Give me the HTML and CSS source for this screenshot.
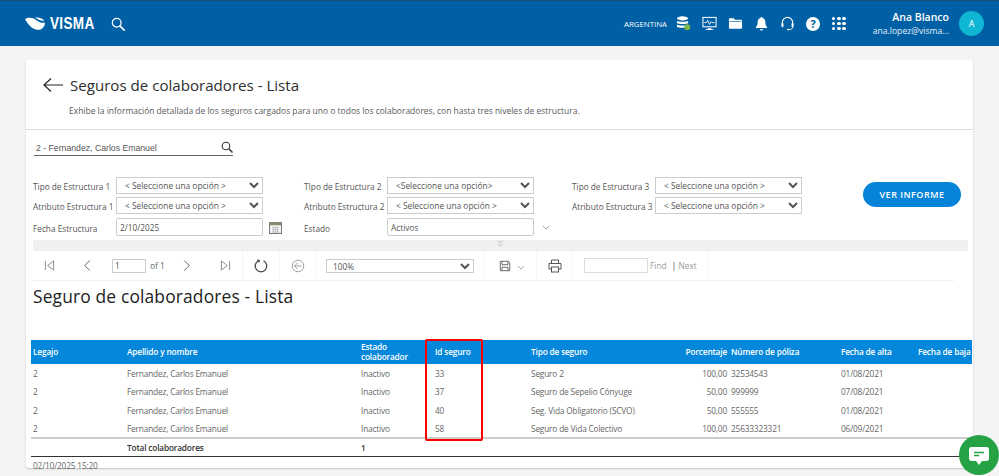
FILE: index.html
```html
<!DOCTYPE html>
<html lang="es">
<head>
<meta charset="utf-8">
<title>Seguros de colaboradores - Lista</title>
<link rel="stylesheet" href="styles.css">
</head>
<body>
<header class="topbar">
  <div class="brand">
    <svg class="logo-mark" viewBox="0 0 20 13"><path d="M0 1.500C4-.5 8 .3 11 2.400c3 2 6 3.800 8.800 2.400.4 3.400-1.800 7-5.600 7.500C9.200 13 3.600 8.500 0 1.500z" fill="#fff"/><path d="M10 .2c3.500-.6 7 .6 9.400 3-2.300.5-4.700-.4-6.800-1.700-.9-.5-1.700-.9-2.600-1.300z" fill="#fff"/></svg>
    <span class="logo-text">VISMA</span>
    <svg class="top-search" viewBox="0 0 16 16"><circle cx="6.500" cy="6.500" r="5" fill="none" stroke="#fff" stroke-width="1.400"/><path d="M10.200 10.200L15 15" stroke="#fff" stroke-width="1.800" stroke-linecap="round"/></svg>
  </div>
  <div class="top-right">
    <span class="country">ARGENTINA</span>
    <svg class="ti" viewBox="0 0 16 16"><g fill="#fff"><ellipse cx="7" cy="2.500" rx="6" ry="2.200"/><path d="M1 5c1 1.500 11 1.500 12 0v2.500c-1 1.500-11 1.500-12 0zM1 9c1 1.500 11 1.500 12 0v2.500c-1 1.500-11 1.500-12 0z"/></g><circle cx="12" cy="12" r="3.200" fill="#7ab648"/></svg>
    <svg class="ti" viewBox="0 0 16 16"><rect x="1" y="1.500" width="14" height="10" fill="none" stroke="#fff" stroke-width="1.100"/><path d="M2.500 7h2.500l1-2.500 2 4.500 1.500-3 1 1h3" fill="none" stroke="#fff" stroke-width=".9"/><path d="M6 13h4v1h2v1H4v-1h2z" fill="#fff"/></svg>
    <svg class="ti" viewBox="0 0 16 16"><path d="M1 3.500c0-.6.400-1 1-1h4l1.500 1.500H14c.6 0 1 .4 1 1v7.500c0 .6-.4 1-1 1H2c-.6 0-1-.4-1-1z" fill="#fff"/><path d="M1.500 5.800h13" stroke="#005fa5" stroke-width=".7"/></svg>
    <svg class="ti" viewBox="0 0 16 16"><path d="M8 1c.7 0 1.100.5 1.100 1.100 2 .6 3 2.200 3 4.400 0 3 .8 4.500 1.900 5.500v.8H2v-.8c1.100-1 1.900-2.500 1.900-5.500 0-2.200 1-3.800 3-4.400C6.900 1.500 7.300 1 8 1zM6.300 14h3.400c0 1-.8 1.500-1.700 1.500S6.300 15 6.300 14z" fill="#fff"/></svg>
    <svg class="ti" viewBox="0 0 16 16"><path d="M2.500 9V7a5.500 5.500 0 0 1 11 0v2" fill="none" stroke="#fff" stroke-width="1.200"/><rect x="1.500" y="7.500" width="2.200" height="4.500" rx="1" fill="#fff"/><rect x="12.300" y="7.500" width="2.200" height="4.500" rx="1" fill="#fff"/><path d="M13.500 12c0 1.500-1.500 2.500-4 2.500" fill="none" stroke="#fff"/><rect x="7.500" y="13.700" width="2.500" height="1.600" rx=".7" fill="#fff"/></svg>
    <span class="help">?</span>
    <span class="apps"><i></i><i></i><i></i><i></i><i></i><i></i><i></i><i></i><i></i></span>
    <div class="user">
      <strong>Ana Blanco</strong>
      <span>ana.lopez@visma...</span>
    </div>
    <span class="avatar">A</span>
  </div>
</header>

<main class="card">
  <section class="page-head">
    <h1><svg class="back" viewBox="0 0 20 14"><path d="M20 7H1M8 .5L1 7l7 6.500" fill="none" stroke="#252525" stroke-width="1.200"/></svg>Seguros de colaboradores - Lista</h1>
    <p>Exhibe la información detallada de los seguros cargados para uno o todos los colaboradores, con hasta tres niveles de estructura.</p>
  </section>

  <section class="filters">
    <div class="emp">
      <span>2 - Fernandez, Carlos Emanuel</span>
      <svg viewBox="0 0 12 12"><circle cx="5" cy="5" r="3.800" fill="none" stroke="#333" stroke-width="1.100"/><path d="M7.800 7.800L11.500 11.500" stroke="#333" stroke-width="1.500"/></svg>
    </div>
    <div class="filter-main">
      <div class="filter-grid">
        <label>Tipo de Estructura 1</label>
        <select><option>&lt; Seleccione una opción &gt;</option></select>
        <label>TIpo de Estructura 2</label>
        <select><option>&lt;Seleccione una opción&gt;</option></select>
        <label>Tipo de Estructura 3</label>
        <select><option>&lt; Seleccione una opción &gt;</option></select>

        <label>Atributo Estructura 1</label>
        <select><option>&lt; Seleccione una opción &gt;</option></select>
        <label>Atributo Estructura 2</label>
        <select><option>&lt; Seleccione una opción &gt;</option></select>
        <label>Atributo Estructura 3</label>
        <select><option>&lt; Seleccione una opción &gt;</option></select>

        <label class="row3">Fecha Estructura</label>
        <div class="field-wrap row3">
          <input class="tall" value="2/10/2025">
          <svg class="cal" viewBox="0 0 12 12"><rect x=".5" y="1.500" width="11" height="10" fill="#fff" stroke="#777"/><rect x=".5" y="1.500" width="11" height="2.500" fill="#8a8a6a"/><path d="M2.500 6h7M2.500 8h7M2.500 10h7M4 5v6M6 5v6M8 5v6" stroke="#aaa" stroke-width=".6"/></svg>
        </div>
        <label class="row3">Estado</label>
        <div class="field-wrap row3">
          <input class="tall" value="Activos">
          <svg class="chev" viewBox="0 0 10 6"><path d="M1 1l4 4 4-4" fill="none" stroke="#666" stroke-width=".8"/></svg>
        </div>
      </div>
      <button class="go">VER INFORME</button>
    </div>
  </section>

  <div class="collapse"><svg viewBox="0 0 8 8"><path d="M1.500 1l2.500 2 2.500-2M1.500 4.500l2.500 2 2.500-2" fill="none" stroke="#999" stroke-width=".7"/></svg></div>

  <div class="toolbar">
    <div class="tool tool-pager">
      <svg class="ic-sm" viewBox="0 0 12 12"><path d="M1.500 1v10M10.500 1L4 6l6.500 5z" fill="none" stroke="#777" stroke-width=".9"/></svg>
      <svg class="ic-sm ml-prev" viewBox="0 0 12 12"><path d="M8.500 .5L3 6l5.500 5.500" fill="none" stroke="#555" stroke-width="1"/></svg>
      <input class="page-in" value="1">
      <span class="of">of 1</span>
      <svg class="ic-sm" viewBox="0 0 12 12"><path d="M3.500 .5L9 6l-5.500 5.500" fill="none" stroke="#555" stroke-width="1"/></svg>
      <svg class="ic-sm ml-last" viewBox="0 0 12 12"><path d="M10.500 1v10M1.500 1L8 6l-6.500 5z" fill="none" stroke="#777" stroke-width=".9"/></svg>
    </div>
    <div class="tool tool-refresh"><svg viewBox="0 0 14 14"><path d="M4.500 1.800a5.800 5.800 0 1 0 5 0" fill="none" stroke="#444" stroke-width="1.200"/><path d="M2.800 .5l3.200.5-.8 3z" fill="#444"/></svg></div>
    <div class="tool tool-back"><svg viewBox="0 0 14 14"><circle cx="7" cy="7" r="5.800" fill="none" stroke="#888" stroke-width=".8"/><path d="M10.500 7H3.500M6.500 4L3.500 7l3 3" fill="none" stroke="#888" stroke-width=".8"/></svg></div>
    <div class="tool tool-zoom"><select><option>100%</option></select></div>
    <div class="tool tool-save">
      <svg class="ic-save" viewBox="0 0 14 14"><path d="M1.500 1.500h9.500l1.500 1.500v9.500h-11z" fill="none" stroke="#555" stroke-width="1"/><path d="M3.500 1.500v4h7v-4M3.500 12.500v-4h7v4" fill="none" stroke="#555" stroke-width="1"/></svg>
      <svg class="ic-chev" viewBox="0 0 10 6"><path d="M1 1l4 4 4-4" fill="none" stroke="#777" stroke-width=".8"/></svg>
    </div>
    <div class="tool tool-print"><svg viewBox="0 0 14 14"><path d="M3.500 4.500V1h7v3.500M3.500 10H1V4.500h12V10h-2.500" fill="none" stroke="#555" stroke-width="1"/><rect x="3.500" y="8" width="7" height="5" fill="none" stroke="#555"/></svg></div>
    <div class="tool tool-find">
      <input class="find-in">
      <span class="find">Find</span><span class="sep">|</span><span class="find">Next</span>
    </div>
  </div>

  <section class="report">
    <h2>Seguro de colaboradores - Lista</h2>
    <div class="table-wrap">
      <table>
        <colgroup>
          <col class="c1"><col class="c2"><col class="c3"><col class="c4"><col class="c5"><col class="c6"><col class="c7"><col class="c8"><col class="c9">
        </colgroup>
        <thead>
          <tr><th>Legajo</th><th>Apellido y nombre</th><th>Estado colaborador</th><th>Id seguro</th><th>Tipo de seguro</th><th class="num">Porcentaje</th><th>Número de póliza</th><th>Fecha de alta</th><th>Fecha de baja</th></tr>
        </thead>
        <tbody>
          <tr><td>2</td><td>Fernandez, Carlos Emanuel</td><td>Inactivo</td><td>33</td><td>Seguro 2</td><td class="num">100,00</td><td>32534543</td><td>01/08/2021</td><td></td></tr>
          <tr><td>2</td><td>Fernandez, Carlos Emanuel</td><td>Inactivo</td><td>37</td><td>Seguro de Sepelio Cónyuge</td><td class="num">50,00</td><td>999999</td><td>07/08/2021</td><td></td></tr>
          <tr><td>2</td><td>Fernandez, Carlos Emanuel</td><td>Inactivo</td><td>40</td><td>Seg. Vida Obligatorio (SCVO)</td><td class="num">50,00</td><td>555555</td><td>01/08/2021</td><td></td></tr>
          <tr><td>2</td><td>Fernandez, Carlos Emanuel</td><td>Inactivo</td><td>58</td><td>Seguro de Vida Colectivo</td><td class="num">100,00</td><td>25633323321</td><td>06/09/2021</td><td></td></tr>
        </tbody>
        <tfoot>
          <tr><td></td><td>Total colaboradores</td><td>1</td><td colspan="6"></td></tr>
        </tfoot>
      </table>
      <div class="highlight"></div>
    </div>
    <div class="stamp">02/10/2025 15:20</div>
  </section>
</main>

<button class="chat" aria-label="Chat">
  <svg viewBox="0 0 22 21"><path d="M3.500 1h15C20 1 21 2 21 3.500v9c0 1.500-1 2.500-2.500 2.500H14l-3 4-3-4H3.500C2 15 1 14 1 12.500v-9C1 2 2 1 3.500 1z" fill="#fff"/><path d="M6 6.500h10M6 9.500h5" stroke="#25a244" stroke-width="1.300"/></svg>
</button>
</body>
</html>
```
FILE: styles.css
```css
* { box-sizing: border-box; }
html, body { margin: 0; height: 476px; overflow: hidden; }
body { background: #f4f4f4; font-family: "Open Sans", "Noto Sans", sans-serif; color: #444; }

.topbar {
  height: 46px; background: #0060a5; border-top: 1px solid #1d4f7d;
  display: flex; justify-content: space-between; align-items: center; padding: 0 15px 0 25px;
}
.brand { display: flex; align-items: center; }
.logo-mark { width: 20px; height: 14px; }
.logo-text { width: 44px; margin-left: 5px; font: bold 16.500px/1 "Liberation Sans", sans-serif; color: #fff; letter-spacing: .4px; white-space: nowrap; transform: scaleX(.82); transform-origin: left; }
.top-search { width: 14px; height: 14px; margin-left: 17px; }
.top-right { display: flex; align-items: center; }
.country { font-size: 7.800px; color: #fff; margin-right: 9px; }
.ti { width: 15px; height: 15px; margin-right: 11px; display: block; }
.help { width: 14px; height: 14px; border-radius: 50%; background: #fff; color: #0060a5; font: bold 11px/14px "Open Sans", sans-serif; text-align: center; margin-right: 12px; }
.apps { width: 14px; display: grid; grid-template-columns: repeat(3, 3.400px); gap: 1.800px; }
.apps i { height: 3.400px; border-radius: 50%; background: #fff; }
.user { width: 78px; margin-left: 25px; display: flex; flex-direction: column; align-items: flex-end; color: #fff; line-height: 14px; }
.user strong { font-size: 10.500px; font-weight: 600; white-space: nowrap; }
.user span { font-size: 8.600px; white-space: nowrap; color: #e6eff7; }
.avatar { width: 25px; height: 25px; margin-left: 10px; border-radius: 50%; background: #0fb6d3; color: #fff; font-size: 9px; line-height: 25px; text-align: center; }

.card {
  margin: 14px 26px 0; width: 947px; height: 408px; background: #fff;
  border-radius: 3px; box-shadow: 0 1px 2px rgba(0,0,0,.2); position: relative;
}
.page-head { height: 70px; border-bottom: 1px solid #dcdcdc; padding: 13px 0 0 17px; }
.page-head h1 { margin: 0; display: flex; align-items: center; font-size: 15.100px; font-weight: 400; line-height: 24px; color: #2d2d2d; }
.back { width: 20px; height: 14px; margin-right: 7px; }
.page-head p { margin: 8px 0 0 26px; font-size: 8.470px; line-height: 12px; color: #5a5a5a; }

.filters { padding: 0 7px; }
.emp { width: 199px; height: 14px; margin: 12px 0 0 1px; border-bottom: 1px solid #666; display: flex; justify-content: space-between; align-items: center; padding: 0 0 0 2px; font: 8.700px/13px "Liberation Sans", sans-serif; color: #555; }
.emp svg { width: 12px; height: 12px; margin: -4px 0 0 0; }
.filter-main { margin-top: 21px; position: relative; height: 60px; }
.filter-grid { display: grid; grid-template-columns: 83px 188px 83px 185px 83px 147px; grid-auto-rows: 17px; row-gap: 3px; font-size: 8.250px; color: #555; }
.filter-grid label { line-height: 19px; white-space: nowrap; }
select { height: 17px; width: 147px; border: 1px solid #ccc; background: #fff; font: 8.400px "Open Sans", sans-serif; color: #555; padding: 0 0 0 4px; margin: 0; border-radius: 0; }
.filter-grid label.row3 { margin-top: 1px; height: 18px; line-height: 21px; }
.field-wrap { display: flex; align-items: center; margin-top: 1px; height: 18px; }
.tall { width: 147px; height: 18px; border: 1px solid #ccc; border-radius: 2px; font: 8.300px "Open Sans", sans-serif; color: #555; padding: 0 3px; flex: none; }
.cal { width: 13px; height: 13px; margin-left: 6px; flex: none; }
.chev { width: 8px; height: 5px; margin-left: 8px; flex: none; }
.go { position: absolute; right: 5px; top: 5px; width: 98px; height: 25px; border: 0; border-radius: 13px; background: #0584d8; color: #fff; font: 600 9px "Open Sans", sans-serif; letter-spacing: .5px; }

.collapse { margin: 3px 5px 0 7px; height: 11px; background: #efefef; display: flex; justify-content: center; }
.collapse svg { width: 7px; height: 7px; }
.toolbar { margin: 0 0 0 7px; height: 30px; width: 921px; border-bottom: 1px solid #f0f0f0; display: flex; align-items: stretch; }
.tool { display: flex; align-items: center; border-right: 1px solid #f5f5f5; flex: none; }
.tool-pager { width: 210px; padding-left: 11px; }
.ic-sm { width: 11px; height: 11px; flex: none; }
.ml-prev { margin-left: 27px; }
.page-in { width: 34px; height: 14px; margin-left: 19px; border: 1px solid #ccc; font: 8.300px "Open Sans", sans-serif; padding: 0 2px; color: #555; }
.of { font-size: 8.300px; margin: 0 16px 0 4px; color: #666; }
.ml-last { margin-left: 28px; }
.tool-refresh { width: 37px; justify-content: center; }
.tool-refresh svg, .tool-back svg { width: 14px; height: 14px; }
.tool-back { width: 36px; justify-content: center; }
.tool-zoom { width: 169px; padding-left: 10px; }
.tool-zoom select { width: 148px; height: 14px; font-size: 8.300px; padding-left: 2px; }
.tool-save { width: 52px; padding-left: 14px; }
.ic-save { width: 12px; height: 12px; }
.ic-chev { width: 8px; height: 5px; margin: 3px 0 0 6px; }
.tool-print { width: 36px; justify-content: center; }
.tool-print svg { width: 14px; height: 14px; }
.tool-find { width: 135px; padding-left: 11px; }
.find-in { width: 64px; height: 15px; border: 1px solid #ddd; padding: 0; }
.find { font-size: 8.300px; color: #999; }
.find:first-of-type { margin-left: 2px; }
.sep { font-size: 9px; color: #555; margin: 0 2px 0 5px; }

.report { padding: 0 0 0 5px; }
.report h2 { margin: 0 0 0 2px; padding-top: 2px; font-size: 17.400px; line-height: 26px; font-weight: 400; color: #222; letter-spacing: .15px; }
.table-wrap { position: relative; margin-top: 31px; }
table { width: 941px; border-collapse: collapse; table-layout: fixed; font-size: 8.300px; letter-spacing: -.17px; color: #666; }
.c1 { width: 94px; } .c2 { width: 234px; } .c3 { width: 74px; } .c4 { width: 96px; } .c5 { width: 150px; } .c6 { width: 50px; } .c7 { width: 110px; } .c8 { width: 77px; } .c9 { width: 56px; }
th, td { padding: 0 2px; text-align: left; overflow: hidden; white-space: nowrap; }
thead tr { height: 24px; background: #0587db; }
th { color: #fff; font-weight: 600; line-height: 10.500px; white-space: normal; }
th.num, td.num { text-align: right; }
th.num { white-space: nowrap; }
th:last-child { white-space: nowrap; }
tbody tr { height: 18.600px; }
tfoot tr { height: 18px; border-top: 2px solid #ccc; border-bottom: 1px solid #333; }
tfoot td { color: #333; font-weight: 600; }
.highlight { position: absolute; left: 394px; top: -1px; width: 58px; height: 102px; border: 2px solid #f00; border-radius: 2px; pointer-events: none; }
.stamp { margin: 4px 0 0 2px; font-size: 8.300px; letter-spacing: -.17px; line-height: 9px; color: #666; }

.chat { position: fixed; right: 0; bottom: 1px; width: 40px; height: 40px; border: 0; border-radius: 50%; background: #25a244; padding: 0; display: flex; align-items: center; justify-content: center; }
.chat svg { width: 22px; height: 21px; margin-top: 2px; }
```
